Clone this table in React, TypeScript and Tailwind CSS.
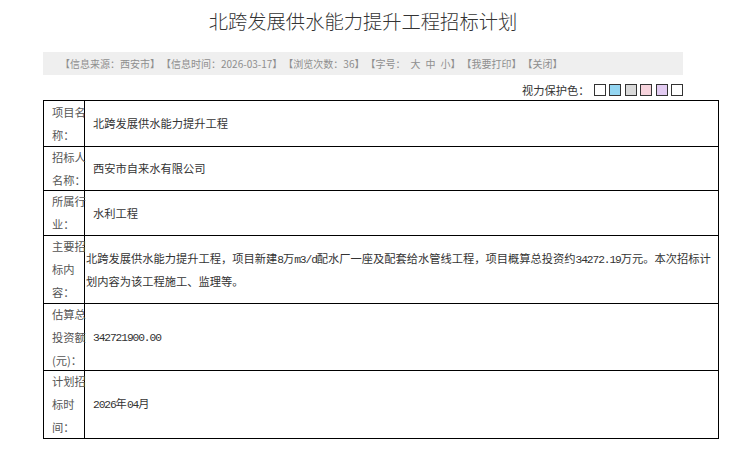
import type React from "react";

type Row = {
  label: string;
  height: string;
  content: React.ReactNode;
  flush?: boolean;
};

function Mono({ children }: { children: React.ReactNode }) {
  return (
    <span className="font-['Liberation_Mono',monospace] tracking-[-1.1px]">
      {children}
    </span>
  );
}

const swatches = [
  "bg-white",
  "bg-[#94d6f2]",
  "bg-[#d9d9d9]",
  "bg-[#f6d3dc]",
  "bg-[#e2cbf1]",
  "bg-white",
];

const rows: Row[] = [
  { label: "项目名称：", height: "h-[45px]", content: "北跨发展供水能力提升工程" },
  { label: "招标人名称：", height: "h-[44px]", content: "西安市自来水有限公司" },
  { label: "所属行业：", height: "h-[45px]", content: "水利工程" },
  {
    label: "主要招标内容：",
    height: "h-[68px]",
    flush: true,
    content: (
      <>
        <span className="block whitespace-nowrap">
          北跨发展供水能力提升工程，项目新建<Mono>8</Mono>万<Mono>m3/d</Mono>
          配水厂一座及配套给水管线工程，项目概算总投资约<Mono>34272.19</Mono>
          万元。本次招标计
        </span>
        <span className="block whitespace-nowrap">划内容为该工程施工、监理等。</span>
      </>
    ),
  },
  {
    label: "估算总投资额(元)：",
    height: "h-[67px]",
    content: <Mono>342721900.00</Mono>,
  },
  {
    label: "计划招标时间：",
    height: "h-[68px]",
    content: (
      <>
        <Mono>2026</Mono>年<Mono>04</Mono>月
      </>
    ),
  },
];

export default function App() {
  return (
    <div className="h-[466px] w-[747px] overflow-hidden bg-white font-['Noto_Sans_CJK_SC',sans-serif] text-[#333]">
      <div className="ml-[43px] w-[640px]">
        <h1 className="pt-[8px] text-center text-[19.3px] leading-[26px] font-light text-[#333]">
          北跨发展供水能力提升工程招标计划
        </h1>

        <div className="mt-[18px] flex h-[23px] items-center gap-[1px] bg-[#efefef] pl-[17px] text-[10px] whitespace-nowrap text-[#8e8e8e]">
          <span>【信息来源：西安市】</span>
          <span>【信息时间：2026-03-17】</span>
          <span>【浏览次数：36】</span>
          <span>
            【字号：<span className="ml-[5px]">大</span>
            <span className="ml-[5px]">中</span>
            <span className="ml-[5px]">小</span>】
          </span>
          <span>【我要打印】</span>
          <span>【关闭】</span>
        </div>

        <div className="mt-[6px] flex h-[18px] items-center justify-end text-[11.25px] text-[#333]">
          <span className="mr-[4px]">视力保护色：</span>
          <div className="flex gap-[3.5px]">
            {swatches.map((color, index) => (
              <span
                className={`block h-[12px] w-[12px] border border-[#333] ${color}`}
                key={index}
              />
            ))}
          </div>
        </div>
      </div>

      <div className="mt-[1px] ml-[43px] w-[676px] border border-black">
        {rows.map((row, index) => (
          <div
            className={`flex ${row.height} ${index > 0 ? "border-t border-black" : ""}`}
            key={row.label}
          >
            <div className="flex w-[41px] shrink-0 items-center border-r border-black pl-[8px]">
              <div className="w-[36px] shrink-0 text-[11.25px] leading-[23px] text-[#555]">
                {row.label}
              </div>
            </div>
            <div
              className={`flex flex-1 items-center text-[11.25px] text-[#333] ${
                row.flush ? "pl-[1px]" : "pl-[8px]"
              }`}
            >
              <div className={row.flush ? "leading-[21px]" : "leading-[23px]"}>
                {row.content}
              </div>
            </div>
          </div>
        ))}
      </div>
    </div>
  );
}
